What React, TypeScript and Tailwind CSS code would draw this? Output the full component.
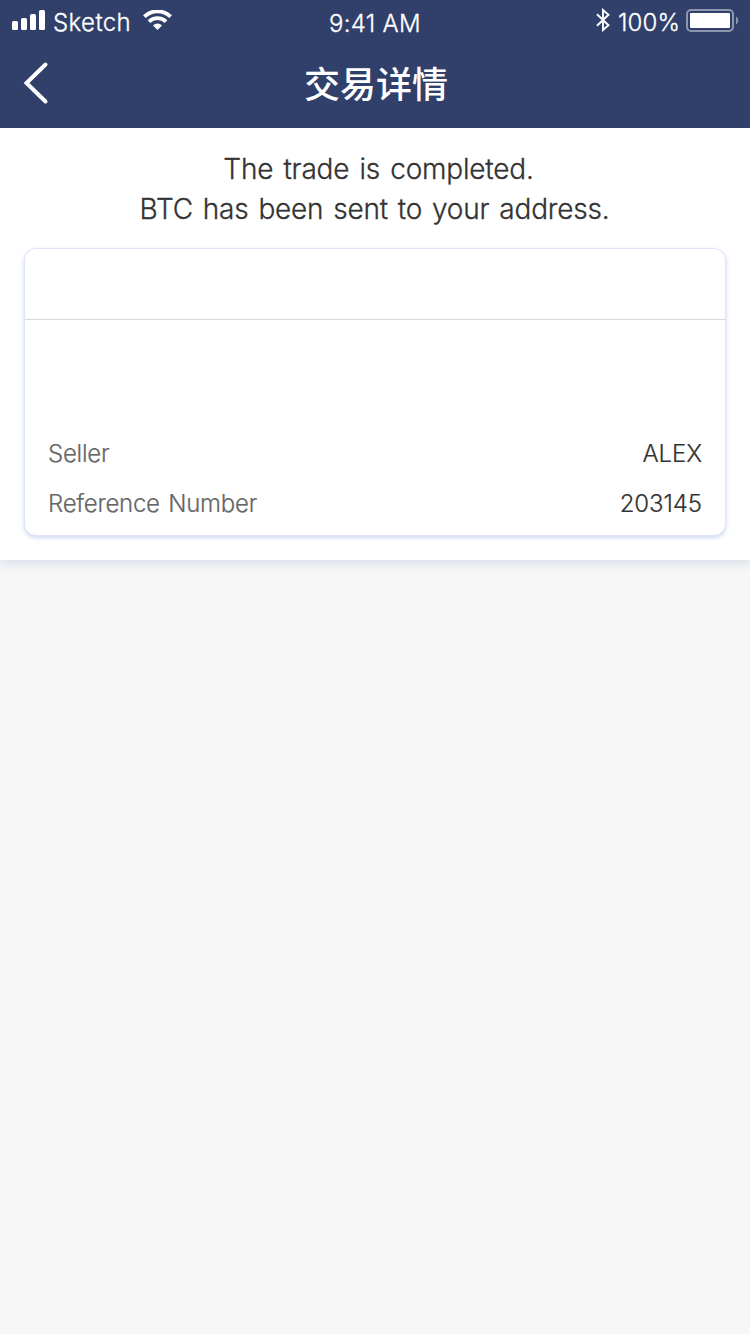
const latin = "font-['Inter','Noto_Sans_CJK_SC',sans-serif]";

function StatusBar() {
  return (
    <div className="grid h-10 grid-cols-3 items-center text-[24px] font-light leading-[28px] [-webkit-text-stroke:0.3px]">
      <div className="flex items-center pl-3">
        <svg width="33" height="20" viewBox="0 0 33 20" fill="white">
          <rect x="0" y="11" width="6" height="9" rx="1.5" />
          <rect x="9" y="8" width="6" height="12" rx="1.5" />
          <rect x="18" y="4" width="6" height="16" rx="1.5" />
          <rect x="27" y="0" width="6" height="20" rx="1.5" />
        </svg>
        <span className="ml-[8px] mt-[6px] w-[77px] whitespace-nowrap tracking-[0.4px]">Sketch</span>
        <svg className="ml-[12.5px]" width="29" height="20" viewBox="0 0 29 20">
          <g fill="none" stroke="white" strokeWidth="3.9">
            <path d="M1.400 6.700a18.500 18.500 0 0 1 26.200 0" />
            <path d="M6 11.600a12.100 12.100 0 0 1 17 0" />
          </g>
          <path d="M14.500 20l-4.500-4.600a6.500 6.500 0 0 1 9 0z" fill="white" />
        </svg>
      </div>
      <span className="mt-[8px] text-center tracking-[0.3px]">9:41 AM</span>
      <div className="flex items-center justify-end pr-[11px]">
        <svg width="14" height="24" viewBox="0 0 14 24" fill="none" stroke="white" strokeWidth="1.9">
          <path d="M1 6.200l11.500 11L7 22V2l5.500 4.800L1 17.800" />
        </svg>
        <span className="ml-[8px] mt-[6px] tracking-[0.1px]">100%</span>
        <svg className="ml-[6px]" width="53" height="24" viewBox="0 0 53 24">
          <rect x="1" y="2" width="46" height="21" rx="4" fill="none" stroke="white" strokeOpacity="0.45" strokeWidth="2" />
          <rect x="4" y="5" width="40" height="15" rx="1" fill="white" />
          <path d="M50 8.500c3 1.500 3 6.500 0 8z" fill="white" fillOpacity="0.45" />
        </svg>
      </div>
    </div>
  );
}

function Row({ label, value }: { label: string; value: string }) {
  return (
    <div className="flex h-[50px] items-center justify-between px-[23px] text-[24px]">
      <span className="tracking-[-0.250px] text-[#666666] [word-spacing:2px]">{label}</span>
      <span className="tracking-[-0.100px] text-[#333333]">{value}</span>
    </div>
  );
}

export default function App() {
  return (
    <div className={`${latin} min-h-[1334px] w-[750px] bg-[#f7f7f7]`}>
      <header className="h-32 bg-[#30406b] text-white">
        <StatusBar />
        <div className="grid h-[86px] grid-cols-[100px_1fr_100px] items-center">
          <svg className="ml-[23px]" width="26" height="44" viewBox="0 0 26 44" fill="none" stroke="white" strokeWidth="4" strokeLinecap="round">
            <path d="M22.500 3.500L3.500 22l19 18.500" />
          </svg>
          <h1 className="mb-[2px] ml-[2px] text-center font-['Noto_Sans_CJK_SC',sans-serif] text-[36px] font-medium leading-[50px]">交易详情</h1>
        </div>
      </header>
      <main className="h-[432px] bg-white px-6 pt-[21px] shadow-[0_4px_10px_rgba(48,84,160,0.15)]">
        <div className="flex flex-col items-center text-[28px] font-light leading-10 text-[#333333] [-webkit-text-stroke:0.3px]">
          <p className="ml-[7px] tracking-[-0.200px] [word-spacing:2.500px]">The trade is completed.</p>
          <p className="mr-[1px] tracking-[-0.200px] [word-spacing:2.200px]">BTC has been sent to your address.</p>
        </div>
        <section className="mt-[19px] h-[288px] rounded-xl border border-[#dde4f7] bg-white font-light shadow-[0_2px_4px_rgba(70,110,220,0.25)] [-webkit-text-stroke:0.2px]">
          <div className="h-[71px] border-b border-[#d8d8dc]" />
          <div className="pt-[109px]">
            <Row label="Seller" value="ALEX" />
            <Row label="Reference Number" value="203145" />
          </div>
        </section>
      </main>
    </div>
  );
}
